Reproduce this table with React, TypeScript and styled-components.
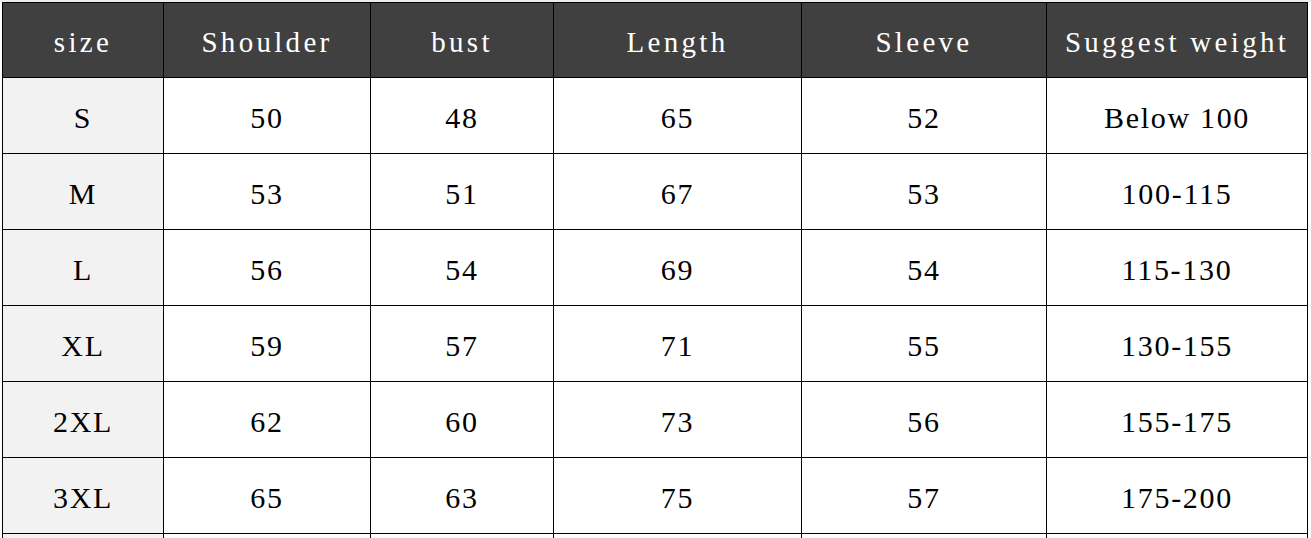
import React from "react";
import styled, { createGlobalStyle } from "styled-components";

const Global = createGlobalStyle`
  html, body { margin: 0; padding: 0; background: #ffffff; }
  body { overflow: hidden; }
`;

const Page = styled.div`
  width: 1311px;
  height: 538px;
  overflow: hidden;
  background: #ffffff;
  border-top: 2px solid #ececec;
  box-sizing: border-box;
  padding-left: 2px;
`;

const Table = styled.table`
  border-collapse: collapse;
  table-layout: fixed;
  font-family: "Liberation Serif", "Times New Roman", serif;
`;

const HeadCell = styled.th<{ $w: number }>`
  width: ${(p) => p.$w}px;
  height: 75px;
  padding: 4px 0 0 0;
  box-sizing: border-box;
  background: #404040;
  color: #ffffff;
  border: 1px solid #000000;
  font-weight: normal;
  font-size: 29px;
  letter-spacing: 3.3px;
  text-align: center;
  vertical-align: middle;
  white-space: nowrap;
`;

const Row = styled.tr`
  height: 76px;
`;

const Cell = styled.td<{ $label?: boolean }>`
  padding: 4px 0 0 0;
  box-sizing: border-box;
  height: 76px;
  background: ${(p) => (p.$label ? "#f2f2f2" : "#ffffff")};
  color: #000000;
  border: 1px solid #000000;
  font-size: 30px;
  letter-spacing: 1.7px;
  text-align: center;
  vertical-align: middle;
  white-space: nowrap;
`;

const columns = [
  { title: "size", w: 161 },
  { title: "Shoulder", w: 207 },
  { title: "bust", w: 183 },
  { title: "Length", w: 248 },
  { title: "Sleeve", w: 245 },
  { title: "Suggest weight", w: 261 },
];

const rows = [
  ["S", "50", "48", "65", "52", "Below 100"],
  ["M", "53", "51", "67", "53", "100-115"],
  ["L", "56", "54", "69", "54", "115-130"],
  ["XL", "59", "57", "71", "55", "130-155"],
  ["2XL", "62", "60", "73", "56", "155-175"],
  ["3XL", "65", "63", "75", "57", "175-200"],
  ["", "", "", "", "", ""],
];

export default function App() {
  return (
    <>
      <Global />
      <Page>
        <Table>
          <thead>
            <tr>
              {columns.map((c) => (
                <HeadCell key={c.title} $w={c.w}>
                  {c.title}
                </HeadCell>
              ))}
            </tr>
          </thead>
          <tbody>
            {rows.map((r, ri) => (
              <Row key={ri}>
                {r.map((v, i) => (
                  <Cell key={i} $label={i === 0}>
                    {v}
                  </Cell>
                ))}
              </Row>
            ))}
          </tbody>
        </Table>
      </Page>
    </>
  );
}
